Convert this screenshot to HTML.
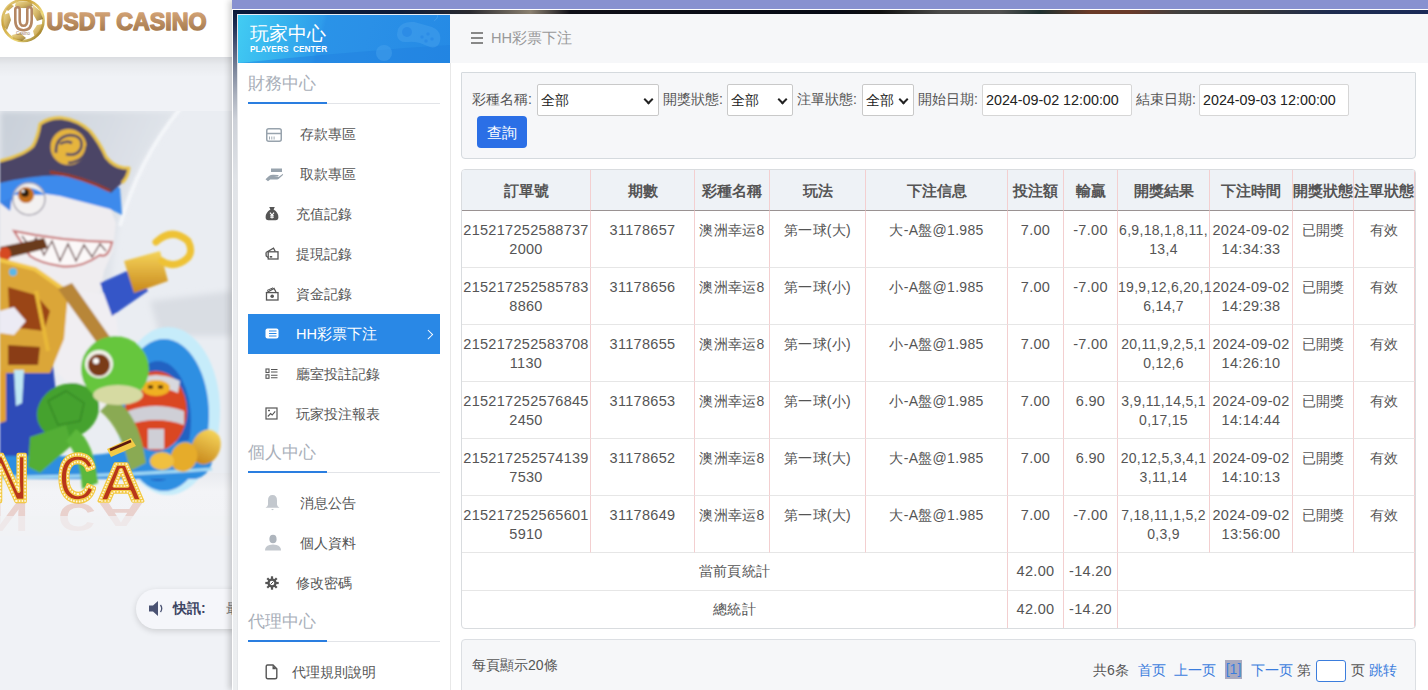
<!DOCTYPE html>
<html><head><meta charset="utf-8">
<style>
*{box-sizing:border-box;margin:0;padding:0}
html,body{width:1428px;height:690px;overflow:hidden}
body{position:relative;background:#f0f2f6;font-family:"Liberation Sans",sans-serif;font-size:14px;color:#555}
.abs{position:absolute}
/* left page */
#lhdr{left:0;top:0;width:232px;height:57px;background:#fff}
#lshadow{left:0;top:57px;width:232px;height:20px;background:linear-gradient(180deg,rgba(0,0,0,.09),rgba(0,0,0,.03) 40%,rgba(0,0,0,0))}
#banner{left:0;top:111px;width:232px;height:425px;overflow:hidden}
#pill{left:136px;top:589px;width:120px;height:40px;border-radius:20px;background:#f5f6fa;box-shadow:0 2px 6px rgba(0,0,0,.15)}
/* modal */
#modal{left:232px;top:0;width:1196px;height:690px;background:#fff;box-shadow:-3px 0 6px rgba(0,0,0,.18)}
#purple{left:0;top:0;width:1196px;height:9px;background:#8891d0}
#wline{left:0;top:9px;width:1196px;height:1px;background:#fff}
#dark{left:1px;top:10px;width:1195px;height:4px;background:linear-gradient(90deg,#0a1a3a 0%,#0e1c3a 14%,#2a2a30 19.8%,#8a8070 24.9%,#101018 28.2%,#060a16 50.1%,#101010 54.1%,#4a4a4a 59.2%,#505050 64.2%,#1e3030 67.5%,#6a3a28 71.7%,#6a3a2a 75%,#404040 79.2%,#383838 85.1%,#1e2c50 91.8%,#1a2a58 100%)}
#dleft{left:1px;top:10px;width:4px;height:680px;background:linear-gradient(180deg,#0a1838 0px,#1c2c52 15px,#4a5676 35px,#7d879c 60px,#aab0bd 85px,#cdd1d8 110px,#e0e3e7 170px,#eaecef 300px,#eceef0 680px)}
#dline{left:5px;top:14px;width:1px;height:676px;background:#e4e6e9}
#side{left:238px;top:14px;width:212px;height:676px;background:#fff}
#sideb{left:450px;top:63px;width:1px;height:627px;background:#e8e8e8}
#phdr{left:238px;top:14px;width:212px;height:49px;border-top:1px solid #e8eef6;background:linear-gradient(105deg,#42ccf3 0%,#36b2ee 22%,#2e9ceb 38%,#2a93e8 40%,#2a90e7 60%,#258ae5 100%);overflow:hidden}
#main{left:451px;top:14px;width:977px;height:676px;background:#fff}
#crumb{left:450px;top:14px;width:978px;height:49px;background:#f6f7f9}

/* filter */
#filter{left:461px;top:72px;width:955px;height:87px;background:#f6f7f9;border:1px solid #d5dade;border-radius:1px 1px 4px 4px}
.lbl{position:absolute;top:90px;font-size:14px;line-height:19px;color:#555;white-space:nowrap}
.sel{position:absolute;top:84px;height:32px;background:#fff;border:1px solid #c9c9c9;border-radius:2px;font-size:14px;color:#222;line-height:30px;padding-left:3px;white-space:nowrap}
.chev{position:absolute;right:6px;top:11px;width:7px;height:7px;border-right:2px solid #222;border-bottom:2px solid #222;transform:rotate(45deg)}
.inp{position:absolute;top:84px;height:32px;background:#fff;border:1px solid #d6d6d6;border-radius:2px;font-size:14.3px;color:#222;line-height:30px;padding-left:3px;white-space:nowrap}
#btn{left:477px;top:116px;width:50px;height:32px;background:#2b6fe6;border-radius:4px;color:#fff;font-size:14.5px;line-height:34px;text-align:center}
/* table */
#tbl{left:461px;top:169px;width:955px;height:460px;border:1px solid #d9dcdf;border-radius:4px;overflow:hidden;background:#fff}
#tbl table{border-collapse:separate;border-spacing:0;table-layout:fixed;width:953px}
#tbl td,#tbl th{border-right:1px solid #f3cfd0;border-bottom:1px solid #e6e6e6;text-align:center;color:#555;font-size:14px;padding:0}
#tbl th{height:41px;background:#eef2f6;font-weight:bold;font-size:15px !important;border-bottom:1px solid #9a9292;line-height:19px;padding-top:1px;white-space:nowrap;overflow:visible}
#tbl tr.d td{height:57px;vertical-align:top;line-height:19px;padding-top:10px;letter-spacing:.3px}
#tbl td.n{font-size:14.5px;letter-spacing:.15px}
#tbl tr.s td{height:38px;line-height:19px;letter-spacing:.3px}
#tbl tr.s2 td{border-bottom:none;height:37px}
/* pager */
#pager{left:461px;top:639px;width:955px;height:70px;background:#f6f7f9;border:1px solid #dcdfe3;border-radius:4px}
.pg{position:absolute;top:661px;font-size:14px;line-height:19px;white-space:nowrap;color:#555}
.pg.b{color:#3b7ddd}

/* sidebar */
.sec{position:absolute;left:247.5px;font-size:17.2px;line-height:22px;color:#a9afb9;white-space:nowrap}
.secl{position:absolute;left:248px;width:192px;height:1px;background:#e2e4e8}
.secb{position:absolute;left:248px;width:79px;height:2px;background:#2a7ee0}
.it{position:absolute;font-size:14px;line-height:19px;color:#555;white-space:nowrap}
.ic{position:absolute}
#act{left:248px;top:314px;width:192px;height:40px;background:#2988e6}
</style></head><body>
<div id="lhdr" class="abs"></div><div id="lshadow" class="abs"></div>
<svg class="abs" style="left:0;top:0" width="232" height="50" viewBox="0 0 232 50">
<defs>
<linearGradient id="lg1" x1="0" y1="0" x2="0" y2="1"><stop offset="0" stop-color="#dcab7e"/><stop offset="1" stop-color="#9c7246"/></linearGradient>
<linearGradient id="ring" x1="0" y1="0" x2="1" y2="1"><stop offset="0" stop-color="#f6e7a6"/><stop offset=".3" stop-color="#c9a03a"/><stop offset=".65" stop-color="#eed97a"/><stop offset="1" stop-color="#7f6218"/></linearGradient>
<linearGradient id="pent" x1="0" y1="0" x2="1" y2="1"><stop offset="0" stop-color="#e9d27a"/><stop offset=".5" stop-color="#c7a03c"/><stop offset="1" stop-color="#6f5414"/></linearGradient>
</defs>
<circle cx="23" cy="20.5" r="20.5" fill="#fff" stroke="url(#ring)" stroke-width="2.6"/>
<g fill="url(#pent)" opacity=".8">
<path d="M16 1.5 L31 1.5 L33 6 L24 9 L15 6 Z"/>
<path d="M33 5 L40 11 L43 19 L37 21 L33 14 Z"/>
<path d="M37 25 L43 24 L41 33 L35 38 L33 31 Z"/>
<path d="M12 35 L20 33 L26 38 L22 41 L13 39 Z"/>
<path d="M3 15 L9 13 L11 20 L7 30 L3 26 Z"/>
<path d="M10 4 L14 6 L8 11 L6 9 Z"/>
</g>
<path d="M15 23 Q12 10 20 8 L28 8 Q35 10 32 23 Q30 31 23.5 31 Q17 31 15 23 Z" fill="#fff" opacity=".9"/>
<path d="M17.5 9.5 V20 Q17.5 28 23.5 28 Q29.5 28 29.5 20 V9.5" fill="none" stroke="#b48763" stroke-width="7" stroke-linecap="round"/>
<path d="M17.5 9.5 V20 Q17.5 28 23.5 28 Q29.5 28 29.5 20 V9.5" fill="none" stroke="#fff" stroke-width="1.8" stroke-linecap="round"/>
<text x="16" y="34.5" font-family="Liberation Sans" font-size="4.5" fill="#9a7a5e">Casino</text>
<text x="46.5" y="30" font-family="Liberation Sans" font-weight="bold" font-size="24.5" fill="url(#lg1)" stroke="url(#lg1)" stroke-width="1.5" stroke-linejoin="round" textLength="160" lengthAdjust="spacingAndGlyphs">USDT CASINO</text>
</svg>
<div id="banner" class="abs"><svg width="232" height="425" viewBox="0 0 232 425">
<defs>
<linearGradient id="bg1" x1="0" y1="0" x2="1" y2="0.6"><stop offset="0" stop-color="#c8cfd8"/><stop offset=".5" stop-color="#d8dde4"/><stop offset="1" stop-color="#e9ecf1"/></linearGradient>
<linearGradient id="gold" x1="0" y1="0" x2="0" y2="1"><stop offset="0" stop-color="#f5d45a"/><stop offset="1" stop-color="#c8881c"/></linearGradient>
<linearGradient id="floor" x1="0" y1="0" x2="0" y2="1"><stop offset="0" stop-color="#e9ebef"/><stop offset=".3" stop-color="#f3f4f7"/><stop offset="1" stop-color="#f1f2f5"/></linearGradient>
<filter id="bl" x="-10%" y="-10%" width="120%" height="120%"><feGaussianBlur stdDeviation="0.8"/></filter>
<filter id="bl2"><feGaussianBlur stdDeviation="3"/></filter>
</defs>
<rect width="232" height="425" fill="#eaedf2"/>
<path d="M0 0 L178 0 Q135 50 118 115 Q108 170 112 240 L0 240 Z" fill="url(#bg1)" filter="url(#bl2)"/>
<path d="M180 -2 Q138 50 120 115" stroke="#f6f8fb" stroke-width="4" fill="none" opacity=".85" filter="url(#bl)"/>
<path d="M150 190 L232 180 L232 225 L160 225 Z" fill="#d9dde3" filter="url(#bl2)"/>
<rect x="0" y="362" width="232" height="63" fill="url(#floor)"/>
<g filter="url(#bl)">
<!-- wave -->
<ellipse cx="168" cy="300" rx="52" ry="84" fill="#c6ecfa"/>
<ellipse cx="164" cy="304" rx="45" ry="76" fill="#2f8fe2"/>
<ellipse cx="158" cy="310" rx="33" ry="60" fill="#2462c2"/>
<path d="M140 260 Q175 290 160 360" stroke="#4aa0ea" stroke-width="1.5" fill="none"/>
<path d="M0 340 Q80 352 140 336 L212 326 Q218 362 196 368 L0 368 Z" fill="#2f8ee0"/>
<path d="M0 366 Q100 366 212 358" stroke="#a4dcf5" stroke-width="3" fill="none"/>
<!-- body dark blue -->
<path d="M0 240 L52 246 L58 300 L50 345 L0 345 Z" fill="#2d4cb8"/>
<!-- white belly -->
<path d="M40 170 L114 185 L120 240 L114 295 L95 300 L58 262 L44 215 Z" fill="#f0eef2"/>
<!-- submarine -->
<ellipse cx="156" cy="300" rx="31" ry="40" fill="#da4622"/>
<path d="M128 300 Q156 290 184 300 L184 314 Q156 304 128 314 Z" fill="#cfcfd6"/>
<path d="M132 270 Q156 258 180 270 L178 282 Q156 272 134 282 Z" fill="#d8d8de"/>
<ellipse cx="156" cy="277" rx="14" ry="8" fill="#f0b020"/>
<path d="M148 276 h5 M158 276 h5" stroke="#3a2010" stroke-width="3"/>
<rect x="148" y="318" width="16" height="20" fill="#cfcfd6"/>
<!-- coins -->
<ellipse cx="206" cy="336" rx="14" ry="18" fill="url(#gold)" transform="rotate(25 206 336)"/>
<ellipse cx="184" cy="346" rx="13" ry="15" fill="#e6ac2c" transform="rotate(25 184 346)"/>
<ellipse cx="162" cy="350" rx="12" ry="9" fill="#f0c040"/>
<!-- face -->
<path d="M0 80 L40 82 L60 84 L110 97 L116 112 L113 140 L104 160 L100 182 L60 178 L0 155 Z" fill="#efedf0"/>
<!-- bandana -->
<path d="M0 68 L50 58 L100 69 L120 77 L122 104 L110 98 L60 85 L40 82 L0 92 Z" fill="#3d8aec"/>
<path d="M0 92 L12 86 L10 100 Z" fill="#3a82e4"/>
<!-- eye -->
<circle cx="29" cy="88" r="16" fill="#f3f1f1" stroke="#a8a6b0" stroke-width="1.5"/>
<path d="M13 84 Q29 70 45 84" fill="#3d8aec"/>
<circle cx="26" cy="84" r="8" fill="#c4701c"/><circle cx="25" cy="82" r="4" fill="#2a1a10"/><circle cx="23" cy="80" r="1.5" fill="#fff"/>
<!-- mouth -->
<path d="M14 120 Q60 130 112 131 Q108 148 100 144 Q80 158 60 155 Q40 152 30 145 Z" fill="#fbf8f8" stroke="#c56a6a" stroke-width="2"/>
<path d="M22 125 L30 136 L36 127 L44 144 L52 130 L60 150 L68 133 L76 150 L84 134 L92 146 L100 133 L106 140" stroke="#6a4a4a" stroke-width="1.4" fill="none"/>
<!-- cigar -->
<path d="M0 136 L44 127 L48 137 L4 148 Z" fill="#6a3a1e"/>
<ellipse cx="5" cy="143" rx="6" ry="7" fill="#d64a20"/>
<!-- hat -->
<path d="M0 50 Q24 44 33 35 Q38 26 40 13 Q50 6 62 7 Q78 9 90 20 Q100 32 106 46 Q114 56 124 57 L129 57 Q128 66 122 72 L111 82 Q100 72 80 67 Q50 60 0 72 Z" fill="#4b4566"/>
<path d="M0 50 Q24 44 33 35 Q38 26 40 13 Q50 6 62 7 Q78 9 90 20 Q100 32 106 46 Q114 56 124 57 L129 57 Q128 66 122 72" stroke="#e8c24a" stroke-width="3" fill="none" stroke-linejoin="round"/>
<path d="M50 61 Q82 66 110 80" stroke="#9a3a22" stroke-width="3" fill="none"/>
<circle cx="68.5" cy="36" r="18" fill="#e6b53c"/>
<path d="M56 42 Q55 26 70 24 Q84 25 81 37 Q77 46 66 43 M68 52 Q86 50 87 35 M60 33 Q66 29 72 32" stroke="#4b4566" stroke-width="2.6" fill="none"/>
<!-- arm + hook -->
<path d="M100 172 L136 156 L148 180 L112 205 Z" fill="#3456c8"/>
<path d="M124 150 L160 140 L168 170 L134 182 Z" fill="url(#gold)"/>
<path d="M156 131 Q172 116 188 130 Q196 145 180 152 Q170 156 162 150" stroke="#eec236" stroke-width="7" fill="none" stroke-linecap="round"/>
<!-- chest -->
<path d="M0 149 L35 158 L68 182 L64 228 L50 262 L0 262 Z" fill="#dba637"/>
<path d="M8 176 L36 184 L50 200 L44 220 L10 216 Z" fill="#9a4418"/>
<path d="M8 234 L40 236 L38 254 L8 254 Z" fill="#8a3c14"/>
<path d="M0 149 L35 158 L66 180" stroke="#f2c848" stroke-width="4" fill="none"/>
<path d="M36 180 L48 240" stroke="#e8b838" stroke-width="4" fill="none"/>
<circle cx="13" cy="161" r="4" fill="#5ab8e8"/>
<path d="M0 200 L14 196 L26 210 L14 224 L0 222 Z" fill="#ecebf4"/>
<path d="M0 262 L6 258 L6 310 L0 312 Z" fill="#e0a030"/>
<path d="M14 259 L24 259 L22 292 L16 295 Z" fill="#bfe8f4"/>
<!-- strap -->
<path d="M58 178 L72 172 L110 226 L100 236 Z" fill="#b88638"/>
<!-- turtle shell & flippers -->
<ellipse cx="68" cy="300" rx="32" ry="27" fill="#45a22e" transform="rotate(-25 68 300)"/>
<path d="M48 290 L66 280 L84 292 L80 310 L58 314 Z" fill="none" stroke="#378a26" stroke-width="1.5"/>
<path d="M30 326 L66 314 L72 334 L40 362 L28 356 Z" fill="#52ae34"/>
<path d="M76 318 Q94 330 98 372 L82 378 Q80 345 66 330 Z" fill="#5cb83a"/>
<path d="M112 288 Q138 298 146 352 L130 360 Q122 318 100 300 Z" fill="#8aaa52"/>
<!-- turtle head -->
<ellipse cx="115" cy="258" rx="34" ry="33" fill="#66c63c"/>
<ellipse cx="118" cy="284" rx="25" ry="10" fill="#d6daa2"/>
<circle cx="99" cy="253" r="14" fill="#f2f2ea"/><circle cx="99" cy="254" r="11" fill="#7a3a14"/><circle cx="96" cy="250" r="3" fill="#fff"/>
</g>
<!-- letters -->
<g font-family="Liberation Sans" font-weight="bold" font-size="67">
<g fill="#b8361a" stroke="#f3ca46" stroke-width="4.5" stroke-linejoin="round">
<text transform="translate(-10 390) scale(0.8 1)">N</text>
<text transform="translate(58 390) scale(0.78 1)">C</text>
<text transform="translate(98 390) scale(0.95 0.8)">A</text></g>
<g fill="none" stroke="#fff4dc" stroke-width="2" stroke-dasharray="0.1 3.4" stroke-linecap="round">
<text transform="translate(-10 390) scale(0.8 1)">N</text>
<text transform="translate(58 390) scale(0.78 1)">C</text>
<text transform="translate(98 390) scale(0.95 0.8)">A</text></g>
</g>
<path d="M107 338 L131 327 L136 335 L111 346 Z" fill="#f3ca46"/>
<path d="M110 339 L131 330" stroke="#5a1a10" stroke-width="2.5"/>
<g font-family="Liberation Sans" font-weight="bold" font-size="67" opacity=".2" fill="#c85030">
<text transform="translate(58 392) scale(0.78 -0.6)">C</text><text transform="translate(98 392) scale(0.95 -0.5)">A</text><text transform="translate(-10 392) scale(0.8 -0.6)">N</text></g>
<rect x="0" y="405" width="232" height="20" fill="#f1f2f5" opacity=".7"/>
</svg></div>
<div id="pill" class="abs"></div>
<svg class="abs" style="left:148px;top:600px" width="18" height="17" viewBox="0 0 18 17"><path d="M1 5.5 H5 L10 1 V16 L5 11.5 H1 Z" fill="#4a5272"/><path d="M12.5 5 Q15 8.5 12.5 12" stroke="#4a5272" stroke-width="1.3" fill="none"/></svg>
<span class="abs" style="left:173px;top:599px;font-size:14px;line-height:19px;font-weight:bold;color:#3d4563;white-space:nowrap">快訊:</span>
<span class="abs" style="left:226px;top:599px;font-size:14px;line-height:19px;color:#777;white-space:nowrap">最</span>
<div id="modal" class="abs">
</div>
<div class="abs" style="left:232px;top:0;width:1196px;height:690px">
  <div id="purple" class="abs"></div>
  <div id="wline" class="abs"></div>
  <div id="dark" class="abs"></div>
  <div id="dleft" class="abs"></div><div id="dline" class="abs"></div>
</div>
<div id="side" class="abs"></div>
<div id="sideb" class="abs"></div>
<div id="main" class="abs"></div>
<div id="phdr" class="abs"><svg width="212" height="48" viewBox="0 0 212 48" style="position:absolute;left:0;top:0">
<path d="M0 48 L212 48 L212 30 Q120 36 0 48 Z" fill="#1f7fe0" opacity=".5"/>
<g transform="translate(36 0)"><g fill="#4aa4ee" opacity=".45"><path d="M124 14 Q128 6 140 7 L158 12 Q168 16 166 26 Q164 34 156 32 L146 28 Q138 26 134 27 Q124 28 123 20 Z"/><circle cx="110" cy="38" r="8"/></g>
<g fill="#2a8ae6" opacity=".8"><circle cx="133" cy="17" r="5"/><circle cx="148" cy="22" r="1.7"/><circle cx="154" cy="19" r="1.7"/><circle cx="152" cy="26" r="1.7"/><circle cx="158" cy="24" r="1.7"/></g>
<path d="M160 6 Q166 2 162 -2" stroke="#4aa4ee" stroke-width="1" fill="none" opacity=".6"/></g>
</svg></div>
<div id="crumb" class="abs"></div>

<div id="filter" class="abs"></div>
<span class="lbl" style="left:472px">彩種名稱:</span>
<div class="sel" style="left:537px;width:122px">全部<i class="chev"></i></div>
<span class="lbl" style="left:663px">開獎狀態:</span>
<div class="sel" style="left:727px;width:66px">全部<i class="chev"></i></div>
<span class="lbl" style="left:797px">注單狀態:</span>
<div class="sel" style="left:862px;width:52px">全部<i class="chev"></i></div>
<span class="lbl" style="left:918px">開始日期:</span>
<div class="inp" style="left:982px;width:150px">2024-09-02 12:00:00</div>
<span class="lbl" style="left:1136px">結束日期:</span>
<div class="inp" style="left:1199px;width:150px">2024-09-03 12:00:00</div>
<div id="btn" class="abs">查詢</div>
<div id="tbl" class="abs"><table>
<colgroup><col style="width:129px"><col style="width:104px"><col style="width:75px"><col style="width:96px"><col style="width:142px"><col style="width:56px"><col style="width:54px"><col style="width:92px"><col style="width:83px"><col style="width:61px"><col style="width:61px"></colgroup>
<tr><th>訂單號</th><th>期數</th><th>彩種名稱</th><th>玩法</th><th>下注信息</th><th>投注額</th><th>輸贏</th><th>開獎結果</th><th>下注時間</th><th>開獎狀態</th><th>注單狀態</th></tr>
<tr class='d'><td class='n'>215217252588737<br>2000</td><td class='n'>31178657</td><td>澳洲幸运8</td><td>第一球(大)</td><td>大-A盤@1.985</td><td class='n'>7.00</td><td class='n'>-7.00</td><td>6,9,18,1,8,11,<br>13,4</td><td class='n'>2024-09-02<br>14:34:33</td><td>已開獎</td><td>有效</td></tr>
<tr class='d'><td class='n'>215217252585783<br>8860</td><td class='n'>31178656</td><td>澳洲幸运8</td><td>第一球(小)</td><td>小-A盤@1.985</td><td class='n'>7.00</td><td class='n'>-7.00</td><td>19,9,12,6,20,1<br>6,14,7</td><td class='n'>2024-09-02<br>14:29:38</td><td>已開獎</td><td>有效</td></tr>
<tr class='d'><td class='n'>215217252583708<br>1130</td><td class='n'>31178655</td><td>澳洲幸运8</td><td>第一球(小)</td><td>小-A盤@1.985</td><td class='n'>7.00</td><td class='n'>-7.00</td><td>20,11,9,2,5,1<br>0,12,6</td><td class='n'>2024-09-02<br>14:26:10</td><td>已開獎</td><td>有效</td></tr>
<tr class='d'><td class='n'>215217252576845<br>2450</td><td class='n'>31178653</td><td>澳洲幸运8</td><td>第一球(小)</td><td>小-A盤@1.985</td><td class='n'>7.00</td><td class='n'>6.90</td><td>3,9,11,14,5,1<br>0,17,15</td><td class='n'>2024-09-02<br>14:14:44</td><td>已開獎</td><td>有效</td></tr>
<tr class='d'><td class='n'>215217252574139<br>7530</td><td class='n'>31178652</td><td>澳洲幸运8</td><td>第一球(大)</td><td>大-A盤@1.985</td><td class='n'>7.00</td><td class='n'>6.90</td><td>20,12,5,3,4,1<br>3,11,14</td><td class='n'>2024-09-02<br>14:10:13</td><td>已開獎</td><td>有效</td></tr>
<tr class='d'><td class='n'>215217252565601<br>5910</td><td class='n'>31178649</td><td>澳洲幸运8</td><td>第一球(大)</td><td>大-A盤@1.985</td><td class='n'>7.00</td><td class='n'>-7.00</td><td>7,18,11,1,5,2<br>0,3,9</td><td class='n'>2024-09-02<br>13:56:00</td><td>已開獎</td><td>有效</td></tr>
<tr class="s"><td colspan="5">當前頁統計</td><td class='n'>42.00</td><td class='n'>-14.20</td><td colspan="4"></td></tr>
<tr class="s s2"><td colspan="5">總統計</td><td class='n'>42.00</td><td class='n'>-14.20</td><td colspan="4"></td></tr>
</table></div>
<div id="pager" class="abs"></div>
<span class="pg" style="left:472px;top:656px">每頁顯示20條</span>
<span class="pg" style="left:1093px">共6条</span>
<span class="pg b" style="left:1138px">首页</span>
<span class="pg b" style="left:1174px">上一页</span>
<span class="pg b" style="left:1225px;top:660px;width:17px;height:19px;background:#a9aac0;text-align:center">[1]</span>
<span class="pg b" style="left:1251px">下一页</span>
<span class="pg" style="left:1297px">第</span>
<div class="abs" style="left:1316px;top:660px;width:30px;height:22px;border:1px solid #3b7ddd;border-radius:3px;background:#fff"></div>
<span class="pg" style="left:1351px">页</span>
<span class="pg b" style="left:1369px">跳转</span>
<div class="abs" style="left:471px;top:32px;width:12px;height:2px;background:#888"></div>
<div class="abs" style="left:471px;top:37px;width:12px;height:2px;background:#888"></div>
<div class="abs" style="left:471px;top:42px;width:12px;height:2px;background:#888"></div>
<span class="abs" style="left:491px;top:29px;font-size:14.6px;line-height:19px;color:#999">HH彩票下注</span>

<div class="abs" style="left:250px;top:22px;font-size:19px;line-height:24px;color:#fff;white-space:nowrap">玩家中心</div>
<div class="abs" style="left:250px;top:45px;font-size:8.3px;line-height:9px;font-weight:bold;color:#fff;letter-spacing:0px;white-space:nowrap">PLAYERS&nbsp; CENTER</div>
<span class="sec" style="top:72px">財務中心</span>
<div class="secl" style="top:103px"></div><div class="secb" style="top:102px"></div>
<span class="it" style="left:300px;top:125px">存款專區</span>
<span class="it" style="left:300px;top:165px">取款專區</span>
<span class="it" style="left:296px;top:205px">充值記錄</span>
<span class="it" style="left:296px;top:245px">提現記錄</span>
<span class="it" style="left:296px;top:285px">資金記錄</span>
<div id="act" class="abs"></div>
<span class="it" style="left:296px;top:325px;color:#fff;font-size:14.5px">HH彩票下注</span>
<div class="abs" style="left:425px;top:331px;width:6.5px;height:6.5px;border-right:1.8px solid #fff;border-top:1.8px solid #fff;transform:rotate(45deg)"></div>
<span class="it" style="left:296px;top:365px">廳室投註記錄</span>
<span class="it" style="left:296px;top:405px">玩家投注報表</span>
<span class="sec" style="top:440.5px">個人中心</span>
<div class="secl" style="top:472px"></div><div class="secb" style="top:471px"></div>
<span class="it" style="left:300px;top:494px">消息公告</span>
<span class="it" style="left:300px;top:534px">個人資料</span>
<span class="it" style="left:296px;top:574px">修改密碼</span>
<span class="sec" style="top:609.5px">代理中心</span>
<div class="secl" style="top:641px"></div><div class="secb" style="top:640px"></div>
<span class="it" style="left:292px;top:663px">代理規則說明</span>

<svg class="ic" style="left:265px;top:127px" width="18" height="16" viewBox="0 0 18 16"><rect x="1.75" y="1.75" width="14.5" height="12.5" rx="2" fill="none" stroke="#98a3ad" stroke-width="1.5"/><line x1="2" y1="6.5" x2="16" y2="6.5" stroke="#98a3ad" stroke-width="1.5"/><path d="M4.5 9.5v3M6.8 9.5v3M9.1 9.5v3" stroke="#98a3ad" stroke-width="0.9"/></svg>
<svg class="ic" style="left:264px;top:167px" width="20" height="15" viewBox="0 0 20 15"><rect x="7" y="1.5" width="11" height="3.5" fill="#98a3ad"/><path d="M1.5 12.2 L5 9 Q7 7.6 9.5 7.8 L14 8 Q15.5 8.2 14 9.6 L10 9.8 L14.5 10 L19 6.8 Q19.5 7.6 18.5 8.6 L14.5 12 Q13.5 12.6 11.5 12.6 L6.2 12.6 L4 14.2 Z" fill="#98a3ad"/></svg>
<svg class="ic" style="left:265px;top:206px" width="14" height="15" viewBox="0 0 14 15"><path d="M4.2 1 L9.8 1 L8.6 3.6 Q13.4 6.6 13.4 11.2 Q13.4 14.2 10.6 14.2 L3.4 14.2 Q0.6 14.2 0.6 11.2 Q0.6 6.6 5.4 3.6 Z" fill="#555"/><path d="M5 6.6 L7 9.1 L9 6.6 M7 9.1 V12.4 M5.2 9.8 H8.8 M5.2 11.2 H8.8" stroke="#fff" stroke-width="1.1" fill="none"/></svg>
<svg class="ic" style="left:265px;top:247px" width="14" height="13" viewBox="0 0 14 13"><path d="M1 5.5 L8.5 1.2 L10.3 4.5" fill="none" stroke="#555" stroke-width="1.3"/><rect x="3.2" y="4.8" width="9.8" height="7.2" fill="none" stroke="#555" stroke-width="1.3"/><path d="M1 5.5 L1.2 9 L3.2 10.5" fill="none" stroke="#555" stroke-width="1.3"/><rect x="4.8" y="9" width="2.4" height="1.6" fill="#555"/></svg>
<svg class="ic" style="left:265px;top:287px" width="14" height="14" viewBox="0 0 14 14"><path d="M1 6 L9 1.5 L11 5" fill="none" stroke="#555" stroke-width="1.3"/><rect x="1.5" y="5.6" width="11.5" height="7.4" fill="none" stroke="#555" stroke-width="1.3"/><circle cx="7.2" cy="9.3" r="1.8" fill="#555"/><path d="M2 3.5 L8 0.8" stroke="#555" stroke-width="1"/></svg>
<svg class="ic" style="left:265px;top:328px" width="14" height="11" viewBox="0 0 14 11"><rect x="0.5" y="0.5" width="13" height="10" rx="2" fill="#fff"/><path d="M4 3 H11.5 M4 5.5 H11.5 M4 8 H11.5" stroke="#2988e6" stroke-width="1"/></svg>
<svg class="ic" style="left:265px;top:368px" width="13" height="12" viewBox="0 0 13 12"><rect x="1" y="1" width="3" height="3.5" fill="none" stroke="#555" stroke-width="1.1"/><rect x="1" y="6.8" width="3" height="3.5" fill="none" stroke="#555" stroke-width="1.1"/><path d="M6 1.5 H12.5 M6 4 H12.5 M6 7.3 H12.5 M6 9.8 H12.5" stroke="#555" stroke-width="1.1"/></svg>
<svg class="ic" style="left:265px;top:407px" width="13" height="13" viewBox="0 0 13 13"><rect x="1" y="1" width="11" height="11" fill="none" stroke="#555" stroke-width="1.2"/><path d="M2.8 9.5 L5.6 6.5 L7.2 8 L10.2 4.3" fill="none" stroke="#555" stroke-width="1.1"/><path d="M3 3.5 H5 M4 2.5 V4.5" stroke="#555" stroke-width="0.9"/></svg>
<svg class="ic" style="left:264px;top:494px" width="17" height="17" viewBox="0 0 17 17"><path d="M8.5 1 Q4 1 4 6.5 L4 10.5 Q4 12.5 1.5 13.8 L15.5 13.8 Q13 12.5 13 10.5 L13 6.5 Q13 1 8.5 1 Z" fill="#c3c8ce"/><path d="M7 15 H10 L8.5 16.2 Z" fill="#c3c8ce"/></svg>
<svg class="ic" style="left:264px;top:534px" width="18" height="17" viewBox="0 0 18 17"><ellipse cx="9" cy="5" rx="3.6" ry="4.3" fill="#aeb5bd"/><path d="M1 16.4 Q1 12.2 5.5 11 Q9 10.2 12.5 11 Q17 12.2 17 16.4 Z" fill="#c3c8ce"/></svg>
<svg class="ic" style="left:265px;top:576px" width="14" height="14" viewBox="0 0 14 14"><g fill="#555"><circle cx="7" cy="7" r="4.6"/><rect x="5.9" y="0.3" width="2.2" height="13.4"/><rect x="0.3" y="5.9" width="13.4" height="2.2"/><rect x="5.9" y="0.3" width="2.2" height="13.4" transform="rotate(45 7 7)"/><rect x="5.9" y="0.3" width="2.2" height="13.4" transform="rotate(-45 7 7)"/></g><circle cx="7" cy="7" r="2.3" fill="#fff"/><path d="M5.5 8.5 L8.5 5.5" stroke="#555" stroke-width="1"/></svg>
<svg class="ic" style="left:265px;top:664px" width="13" height="16" viewBox="0 0 13 16"><path d="M2.5 1 H8 L11.8 4.8 V13 Q11.8 14.8 10 14.8 H2.8 Q1.2 14.8 1.2 13 V2.8 Q1.2 1 2.5 1 Z" fill="none" stroke="#555" stroke-width="1.4"/><path d="M7.5 1.2 V5.2 H11.6 Z" fill="#555"/></svg>
</body></html>
